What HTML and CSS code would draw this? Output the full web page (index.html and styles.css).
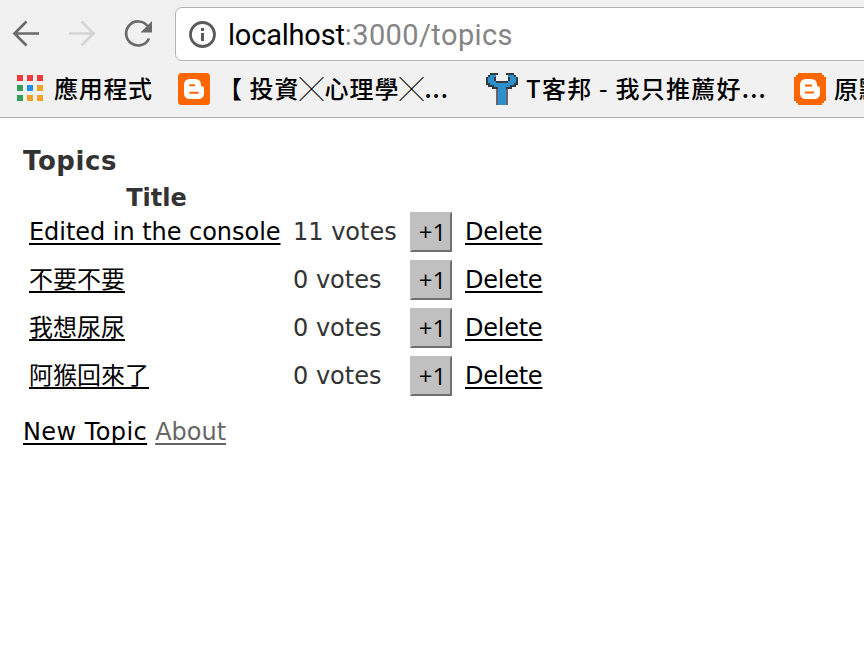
FILE: index.html
```html
<!DOCTYPE html>
<html lang="zh-Hant">
<head>
<meta charset="utf-8">
<title>Topics</title>
<link rel="stylesheet" href="styles.css">
</head>
<body>
<header class="browser">
  <div class="toolbar">
    <svg class="nav" viewBox="0 0 168 60" width="168" height="60" fill="none" stroke-width="2.7">
      <path d="M39 33.5H15M26.5 21.5l-12 12 12 12" stroke="#6a6a6a"/>
      <path d="M69 33.5h24M81.500 21.500l12 12-12 12" stroke="#d5d5d5"/>
      <path d="M147.500 26A12 12 0 1 0 149 38.500" stroke="#6a6a6a"/>
      <path d="M152 21v11.500h-11.500z" fill="#6a6a6a"/>
    </svg>
    <div class="address">
      <svg viewBox="0 0 28 28" width="28" height="28"><circle cx="13.500" cy="14.500" r="12" fill="none" stroke="#5a5a5a" stroke-width="2.800"/><path d="M12 8h3v3h-3zM12 13h3v8h-3z" fill="#5a5a5a"/></svg>
      <span class="url">localhost<span class="path">:3000/topics</span></span>
    </div>
  </div>
  <nav class="bookmarks">
    <a class="mark apps">
      <svg viewBox="0 0 26 26" width="26" height="26" shape-rendering="crispEdges"><path d="M0 0h6v6H0zM10 0h6v6h-6zM20 0h6v6h-6z" fill="#f43b3b"/><path d="M0 10h6v6H0zM0 20h6v6H0z" fill="#35a05a"/><path d="M10 10h6v6h-6z" fill="#2490f0"/><path d="M20 10h6v6h-6zM10 20h6v6h-6zM20 20h6v6h-6z" fill="#f2a226"/></svg>
      <span>應用程式</span>
    </a>
    <a class="mark blog">
      <svg viewBox="0 0 32 32" width="32" height="32"><rect width="32" height="32" rx="3.500" fill="#f60"/><path d="M12 6h5q6 0 6 6 0 1.500 1.500 1.500 1.500 0 1.500 2V20q0 6-6 6h-8q-6 0-6-6v-8q0-6 6-6z" fill="#fff"/><path d="M12.200 12.300h4M12.200 19.700h7.600" stroke="#f60" stroke-width="2" stroke-linecap="round"/></svg>
      <span>【 投資╳心理學╳...</span>
    </a>
    <a class="mark tool">
      <svg viewBox="0 0 32 32" width="32" height="32" shape-rendering="crispEdges"><path d="M4 0h8v2h-2v6h12V2h-2V0h8v2h2v2h2v8h-2v2h-4v2h-4v16H10V16H6v-2H2v-2H0V4h2V2h2z" fill="#343b40"/><path d="M4 2h6v2H8v4h2v2h12V8h2V4h-2V2h6v2h2v6h-2v2h-4v2h-4v18h-8V14H8v-2H4v-2H2V4h2z" fill="#2b90cc"/><path d="M10 16h2v16h-2zM20 16h2v16h-2z" fill="#666"/></svg>
      <span>T客邦 - 我只推薦好...</span>
    </a>
    <a class="mark last">
      <svg viewBox="0 0 32 32" width="32" height="32"><path d="M4 0h24v2h2v2h2v24h-2v2h-2v2H4v-2H2v-2H0V4h2V2h2z" fill="#f60"/><path d="M12 6h5q6 0 6 6 0 1.500 1.500 1.500 1.500 0 1.500 2V20q0 6-6 6h-8q-6 0-6-6v-8q0-6 6-6z" fill="#fff"/><path d="M11 12.500h7M11 19.500h9" stroke="#f60" stroke-width="2"/></svg>
      <span>原點</span>
    </a>
  </nav>
</header>
<main>
  <h1>Topics</h1>
  <div class="topics">
    <div class="heading">Title</div>
    <div class="row"><a class="english">Edited in the console</a><span class="votes">11 votes</span><button>+1</button><a class="delete">Delete</a></div>
    <div class="row"><a class="cjk">不要不要</a><span class="votes">0 votes</span><button>+1</button><a class="delete">Delete</a></div>
    <div class="row"><a class="cjk">我想尿尿</a><span class="votes">0 votes</span><button>+1</button><a class="delete">Delete</a></div>
    <div class="row"><a class="cjk">阿猴回來了</a><span class="votes">0 votes</span><button>+1</button><a class="delete">Delete</a></div>
  </div>
  <footer><a class="new">New Topic</a><a class="about">About</a></footer>
</main>
</body>
</html>
```
FILE: styles.css
```css
* { box-sizing: border-box; }
body {
  margin: 0;
  overflow: hidden;
  background: #fff;
  color: #333;
  font: 24px/36px "DejaVu Sans", "Noto Sans CJK TC", sans-serif;
}
svg { display: block; flex: none; }
.browser {
  height: 118px;
  background: #f1f1f1;
  border-bottom: 1px solid #b3b3b3;
  overflow: hidden;
}
.toolbar { display: flex; height: 61px; }
.address {
  flex: none;
  width: 720px;
  height: 54px;
  margin: 7px 0 0 7px;
  padding-left: 13px;
  display: flex;
  align-items: center;
  gap: 11px;
  border: 1px solid #b3b3b3;
  border-radius: 7px;
  background: #fff;
}
.url {
  padding-top: 2px;
  color: #000;
  font: 29px/52px Roboto, sans-serif;
  letter-spacing: -0.2px;
  white-space: nowrap;
}
.path { color: #858585; letter-spacing: 0.4px; }
.bookmarks {
  display: flex;
  height: 56px;
  color: #000;
  font: 500 24px/36px "Noto Sans CJK TC", sans-serif;
  white-space: nowrap;
}
.mark { display: flex; flex: none; align-items: center; letter-spacing: 0.7px; }
.mark span { padding-bottom: 2px; }
.apps { width: 161px; padding-left: 17px; gap: 11px; }
.apps svg { margin-bottom: 2px; }
.blog { width: 308px; margin-left: 17px; gap: 8px; letter-spacing: 1px; }
.tool { width: 308px; gap: 8px; letter-spacing: 1.25px; }
.last { gap: 8px; }
main { padding: 25px 23px; }
h1 { margin: 0; font-size: 26px; line-height: 36px; letter-spacing: 0.6px; }
.heading { width: 267px; height: 29px; line-height: 38px; text-align: center; font-weight: bold; }
.row {
  display: grid;
  grid-template-columns: 264px 117px 55px 100px;
  align-items: center;
  height: 48px;
  padding-left: 6px;
  white-space: nowrap;
}
.row > a, footer > a {
  justify-self: start;
  color: #000;
  text-decoration: underline;
  text-decoration-thickness: 2px;
  text-underline-offset: 3px;
  text-decoration-skip-ink: none;
}
.row > .english { letter-spacing: -0.04px; }
.row > .delete { letter-spacing: -0.25px; }
button {
  width: 42px;
  height: 40px;
  padding: 0 0 0 3px;
  border: 2px solid;
  border-color: #c0c0c0 #707070 #707070 #c0c0c0;
  background: #c0c0c0;
  color: #000;
  font: 24px/36px "Open Sans", sans-serif;
}
footer { display: flex; gap: 8px; margin-top: 14px; }
footer > .new { letter-spacing: 0.42px; }
footer > a.about { color: #666; }
```
